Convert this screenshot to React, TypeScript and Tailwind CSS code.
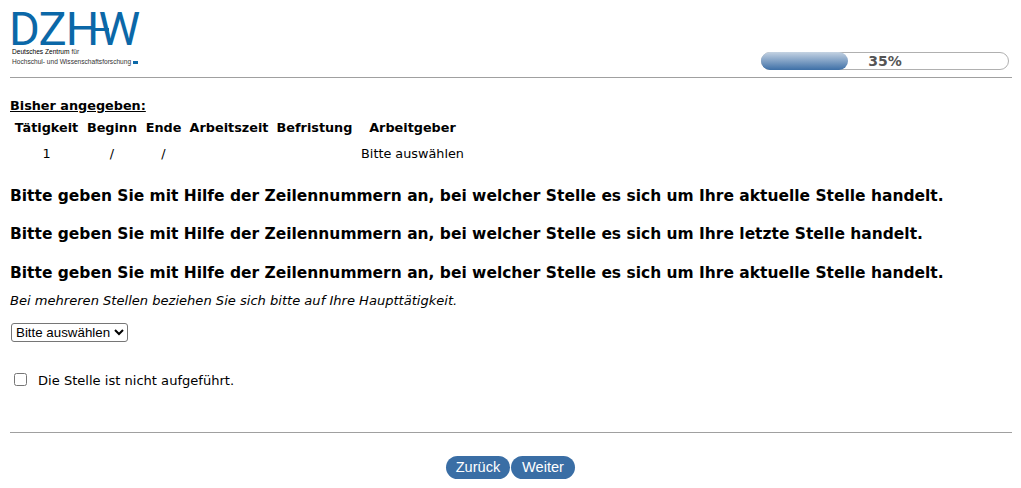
export default function App() {
  const font = "font-['DejaVu_Sans',sans-serif]";
  return (
    <div className={`${font} h-[488px] w-[1021px] overflow-hidden bg-white pl-[10px] pr-[9px] text-[12.8px] text-black`}>
      <header className="flex h-[78px] items-end justify-between border-b border-[#a0a0a0] pb-[7px]">
        <div className="flex h-[70px] w-[140px] flex-col self-start pl-[2px] pt-[8px]">
          <div className="relative ml-[-3px] h-[39px] w-[132px] font-['Roboto',sans-serif] text-[47px] font-normal leading-[42px] tracking-[-0.8px] text-[#0b68a8]">
            DZHW
            <span className="absolute left-[86px] top-[20px] h-[3px] w-[14px] bg-[#0b68a8]" />
          </div>
          <div className="font-['Liberation_Sans',sans-serif] text-[6.6px] leading-[10px] text-[#333]">
            <div><span className="text-black">Deutsches Zentrum</span> für</div>
            <div className="flex items-center gap-[2px]">Hochschul- und Wissenschaftsforschung <span className="inline-block h-[3px] w-[5px] bg-[#0b68a8]" /></div>
          </div>
        </div>
        <div className="relative mr-[3px] h-[18px] w-[248px] rounded-[9px] border border-[#b0b0b0] bg-white">
          <div className="absolute -left-px -top-px h-[18px] w-[87px] rounded-[9px] bg-gradient-to-b from-[#c5d3e2] to-[#3d6fa6]" />
          <div className="absolute inset-0 flex items-center justify-center text-[14px] font-bold leading-none text-[#555]">35%</div>
        </div>
      </header>
      <main>
        <p className="mt-[20px] font-bold leading-[16px] underline">Bisher angegeben:</p>
        <div className="mt-[6px] grid grid-cols-[73px_58px_45px_86px_85px_111px] text-center">
          <div className="h-[16px] font-bold leading-[16px]">Tätigkeit</div>
          <div className="font-bold leading-[16px]">Beginn</div>
          <div className="font-bold leading-[16px]">Ende</div>
          <div className="font-bold leading-[16px]">Arbeitszeit</div>
          <div className="font-bold leading-[16px]">Befristung</div>
          <div className="font-bold leading-[16px]">Arbeitgeber</div>
          <div className="mt-[10px] leading-[16px]">1</div>
          <div className="mt-[10px] leading-[16px]">/</div>
          <div className="mt-[10px] leading-[16px]">/</div>
          <div />
          <div />
          <div className="mt-[10px] leading-[16px]">Bitte auswählen</div>
        </div>
        <h2 className="mt-[24.6px] text-[15.47px] font-bold leading-[19px]">Bitte geben Sie mit Hilfe der Zeilennummern an, bei welcher Stelle es sich um Ihre aktuelle Stelle handelt.</h2>
        <h2 className="mt-[19.4px] text-[15.47px] font-bold leading-[19px]">Bitte geben Sie mit Hilfe der Zeilennummern an, bei welcher Stelle es sich um Ihre letzte Stelle handelt.</h2>
        <h2 className="mt-[19.6px] text-[15.47px] font-bold leading-[19px]">Bitte geben Sie mit Hilfe der Zeilennummern an, bei welcher Stelle es sich um Ihre aktuelle Stelle handelt.</h2>
        <p className="mt-[10.4px] text-[13.07px] italic leading-[16px]">Bei mehreren Stellen beziehen Sie sich bitte auf Ihre Haupttätigkeit.</p>
        <select className="ml-px mt-[14px] block h-[19px] w-[117px] rounded-[3px] border border-[#767676] bg-white font-['Liberation_Sans',sans-serif] text-[13.33px] leading-none text-black" style={{ appearance: "auto" }}>
          <option>Bitte auswählen</option>
        </select>
        <label className="mt-[31px] flex items-center gap-[11px] pl-[4px] text-[13.07px] leading-[16px]">
          <input type="checkbox" className="mt-[-2px] h-[13px] w-[13px]" style={{ appearance: "auto" }} />
          <span>Die Stelle ist nicht aufgeführt.</span>
        </label>
      </main>
      <footer className="mt-[43px] border-t border-[#a0a0a0] pt-[23px]">
        <div className="mr-[1px] flex justify-center gap-px">
          <button className="h-[23px] w-[64px] rounded-[12px] bg-[#3a6ea5] font-['Liberation_Sans',sans-serif] text-[14.6px] leading-none text-white">Zurück</button>
          <button className="h-[23px] w-[64px] rounded-[12px] bg-[#3a6ea5] font-['Liberation_Sans',sans-serif] text-[14.6px] leading-none text-white">Weiter</button>
        </div>
      </footer>
    </div>
  );
}
